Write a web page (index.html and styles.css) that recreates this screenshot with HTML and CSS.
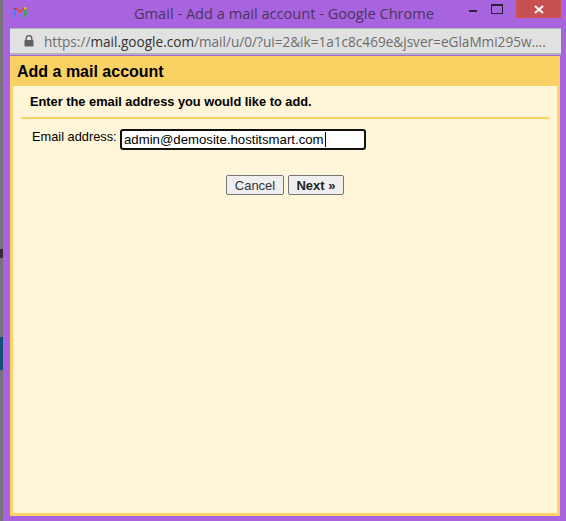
FILE: index.html
```html
<!DOCTYPE html>
<html lang="en">
<head>
  <meta charset="UTF-8" />
  <title>Gmail - Add a mail account - Google Chrome</title>
  <link rel="stylesheet" href="styles.css">
</head>
<body>

<div class="strip"></div>

<div class="window">
  <div class="titlebar">
    <svg class="app-icon" viewBox="0 0 14 12" width="14" height="12">
      <path d="M0.5 11V2.5L3 3.5V11Z" fill="#4285f4"/>
      <path d="M11 3.5L13.5 2.5V11H11Z" fill="#34a853"/>
      <path d="M3 3.5L7 7L11 3.5V1.5L7 5L3 1.5Z" fill="#ea4335"/>
      <path d="M0.5 2.5L3 1.5V3.5Z" fill="#c5221f"/>
      <path d="M11 1.5L13.5 1V3L11 3.5Z" fill="#fbbc04"/>
    </svg>
    <span class="title">Gmail - Add a mail account - Google Chrome</span>
    <div class="controls">
      <span class="minimize"></span>
      <span class="maximize"></span>
      <span class="close">
        <svg viewBox="0 0 10 9" width="10" height="9">
          <path d="M1 1L9 8M9 1L1 8" stroke="#fff" stroke-width="2"/>
        </svg>
      </span>
    </div>
  </div>

  <div class="addressbar">
    <svg class="lock" viewBox="0 0 10 12" width="10" height="12">
      <path d="M2.2 5V3.4a2.8 2.8 0 0 1 5.6 0V5" fill="none" stroke="#5f6368" stroke-width="1.4"/>
      <rect x="0.5" y="5" width="9" height="6.5" rx="0.8" fill="#5f6368"/>
    </svg>
    <span class="url"><span class="url-scheme">https://</span><span class="url-host">mail.google.com</span><span class="url-scheme">/mail/u/0/?ui=2&amp;ik=1a1c8c469e&amp;jsver=eGlaMmi295w....</span></span>
  </div>

  <div class="dialog">
    <h1 class="dialog-title">Add a mail account</h1>
    <div class="dialog-body">
      <p class="intro">Enter the email address you would like to add.</p>
      <div class="field">
        <label class="field-label" for="email">Email address:</label>
        <div class="field-input" id="email"><span>admin@demosite.hostitsmart.com</span><i class="caret"></i></div>
      </div>
      <div class="actions">
        <button class="btn">Cancel</button>
        <button class="btn btn-next">Next »</button>
      </div>
    </div>
  </div>
</div>

</body>
</html>
```

FILE: styles.css
```css
html, body {
  height: 100%;
}

body {
  margin: 0;
  display: flex;
  width: 566px;
  height: 521px;
  overflow: hidden;
  background: #a864de;
  font-family: "Liberation Sans", Arial, sans-serif;
  color: #000;
}

.strip {
  width: 3px;
  flex: none;
  background: linear-gradient(to bottom,
    #77717a 0, #77717a 249px,
    #3a2a35 249px, #3a2a35 258px,
    #77717a 258px, #77717a 337px,
    #0f4f80 337px, #0f4f80 370px,
    #77717a 370px);
}

.window {
  flex: 1;
  display: flex;
  flex-direction: column;
  padding: 0 6px 5px 7px;
}

.titlebar {
  height: 28px;
  flex: none;
  display: flex;
  align-items: center;
  position: relative;
}

.app-icon {
  margin: 0 0 4px 3px;
}

.title {
  position: absolute;
  left: 124px;
  top: 4px;
  font-family: "Open Sans", sans-serif;
  font-size: 14.6px;
  line-height: 18px;
  color: #4b3463;
  white-space: nowrap;
}

.controls {
  margin-left: auto;
  margin-right: -1px;
  display: flex;
  align-items: flex-start;
  align-self: flex-start;
}

.minimize {
  width: 8px;
  height: 2px;
  background: #2b2238;
  margin: 10px 14px 0 0;
}

.maximize {
  width: 10px;
  height: 7px;
  border: 1px solid #2b2238;
  border-top-width: 2px;
  margin: 4px 13px 0 0;
}

.close {
  width: 45px;
  height: 18px;
  background: #c75050;
  display: flex;
  align-items: center;
  justify-content: center;
}

.addressbar {
  height: 27px;
  flex: none;
  box-sizing: border-box;
  background: #e1e1e1;
  border-top: 1px solid #b9b5bd;
  border-bottom: 2px solid #b3b0b6;
  display: flex;
  align-items: center;
  padding-left: 14px;
  margin-right: -1px;
}

.url {
  margin-left: 10px;
  font-family: "Open Sans", sans-serif;
  font-size: 13.6px;
  white-space: nowrap;
}

.url-scheme {
  color: #6d6d6d;
}

.url-host {
  color: #333;
}

.dialog {
  flex: 1;
  display: flex;
  flex-direction: column;
  background: #fad163;
  padding: 0 3px 3px;
  margin-top: 1px;
}

.dialog-title {
  margin: 0;
  height: 30px;
  line-height: 31px;
  font-size: 16px;
  font-weight: bold;
  padding-left: 4px;
}

.dialog-body {
  flex: 1;
  background: #fff5d8;
  padding: 0 8px;
}

.intro {
  margin: 0;
  height: 33px;
  line-height: 31px;
  box-sizing: border-box;
  padding-left: 9px;
  font-size: 12.8px;
  font-weight: bold;
  border-bottom: 2px solid #fad163;
}

.field {
  display: flex;
  align-items: flex-start;
  margin-top: 10px;
}

.field-label {
  font-size: 12.8px;
  line-height: 16px;
  padding-left: 11px;
  width: 76px;
  margin-right: 12px;
  white-space: nowrap;
}

.field-input {
  width: 246px;
  height: 21px;
  box-sizing: border-box;
  border: 2px solid #111;
  border-radius: 3px;
  background: #fff;
  font-size: 13.2px;
  line-height: 16px;
  padding-left: 2px;
  display: flex;
  align-items: center;
  white-space: nowrap;
}

.caret {
  width: 1px;
  height: 15px;
  background: #000;
  margin-left: 1px;
}

.actions {
  display: flex;
  justify-content: center;
  gap: 4px;
  margin-top: 25px;
  margin-left: 205px;
  width: 118px;
}

.btn {
  height: 20px;
  box-sizing: border-box;
  padding: 0 7px;
  border: 1px solid #767676;
  border-radius: 2px;
  background: #efefef;
  font-family: "Liberation Sans", Arial, sans-serif;
  font-size: 13px;
  color: #333;
  flex: none;
  width: 58px;
}

.btn-next {
  width: 56px;
  font-weight: bold;
  color: #222;
}
```
